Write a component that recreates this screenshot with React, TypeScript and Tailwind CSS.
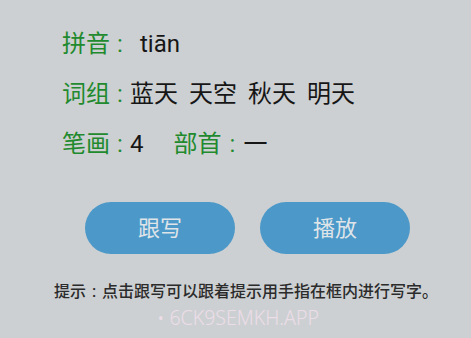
export default function App() {
  const cjk = { fontFamily: 'Roboto, "Noto Sans CJK SC", sans-serif' };
  return (
    <div className="w-[471px] h-[338px] bg-[#cdd0d2] overflow-hidden" style={cjk}>
      <div className="pl-[62px] pt-[19px] text-[24px] leading-[50px]">
        <div className="flex items-center h-[50px]">
          <span className="text-[#1f8a2e]">拼音</span>
          <span className="text-[#1f8a2e] w-[20px] text-center">:</span>
          <span className="ml-[10px] text-[#161616]">tiān</span>
        </div>
        <div className="flex items-center h-[50px]">
          <span className="text-[#1f8a2e]">词组</span>
          <span className="text-[#1f8a2e] w-[20px] text-center">:</span>
          <span className="text-[#161616] flex gap-[11px]">
            <span>蓝天</span>
            <span>天空</span>
            <span>秋天</span>
            <span>明天</span>
          </span>
        </div>
        <div className="flex items-center h-[50px]">
          <span className="text-[#1f8a2e]">笔画</span>
          <span className="text-[#1f8a2e] w-[20px] text-center">:</span>
          <span className="text-[#161616]">4</span>
          <span className="text-[#1f8a2e] ml-[30px]">部首</span>
          <span className="text-[#1f8a2e] w-[22px] text-center">:</span>
          <span className="text-[#161616]">一</span>
        </div>
      </div>
      <div className="flex gap-[25px] pl-[85px] mt-[33px]">
        <button className="w-[150px] h-[52px] rounded-full bg-[#4b98c9] text-[#dfe4e8] text-[22px]">跟写</button>
        <button className="w-[150px] h-[52px] rounded-full bg-[#4b98c9] text-[#dfe4e8] text-[22px]">播放</button>
      </div>
      <div className="flex pl-[54px] mt-[27px] text-[16px] leading-[22px] font-medium text-[#2b2b2b]">
        <span>提示</span>
        <span className="w-[16px] text-center">:</span>
        <span>点击跟写可以跟着提示用手指在框内进行写字。</span>
      </div>
      <div className="flex pl-[157px] mt-[3px] text-[19.5px] leading-[24px] font-light text-[#ecdde8]" style={{ fontFamily: '"Noto Sans", sans-serif' }}>
        • 6CK9SEMKH.APP
      </div>
    </div>
  );
}
